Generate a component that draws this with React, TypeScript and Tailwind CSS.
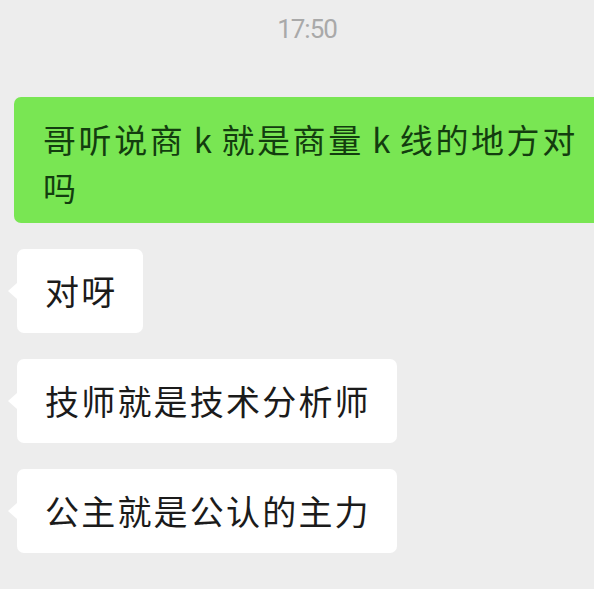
const cjk = { fontFamily: '"Noto Sans CJK SC", "Noto Sans", sans-serif' };

function Received({ text }: { text: string }) {
  return (
    <div className="relative ml-[17px] self-start rounded-[7px] bg-white pl-[28px] pr-[26px] py-[18px]">
      <span className="absolute left-[-9px] top-1/2 h-0 w-0 -translate-y-1/2 border-y-[8px] border-r-[9px] border-y-transparent border-r-white" />
      <p className="text-[34px] leading-[48px] tracking-[2.2px] text-[#1b1b1b]" style={cjk}>
        {text}
      </p>
    </div>
  );
}

export default function App() {
  return (
    <div className="h-[589px] w-[594px] overflow-hidden bg-[#ededed]">
      <div
        className="pl-[20px] pt-[14px] text-center text-[26px] leading-[30px] tracking-[-1px] text-[#a9a9a9]"
        style={{ fontFamily: "Roboto, sans-serif" }}
      >
        17:50
      </div>

      <div className="mt-[53px] flex flex-col gap-[26px]">
        <div className="ml-[14px] w-[600px] rounded-l-[7px] bg-[#79e653] pb-[12px] pl-[29px] pt-[18px]">
          <p className="text-[33px] leading-[48px] tracking-[2.6px] text-[#133d0f]" style={cjk}>
            哥听说商<span className="tracking-[1px]"> k </span>就是商量
            <span className="tracking-[1px]"> k </span>线的地方对
            <br />吗
          </p>
        </div>

        <Received text="对呀" />
        <Received text="技师就是技术分析师" />
        <Received text="公主就是公认的主力" />
      </div>
    </div>
  );
}
